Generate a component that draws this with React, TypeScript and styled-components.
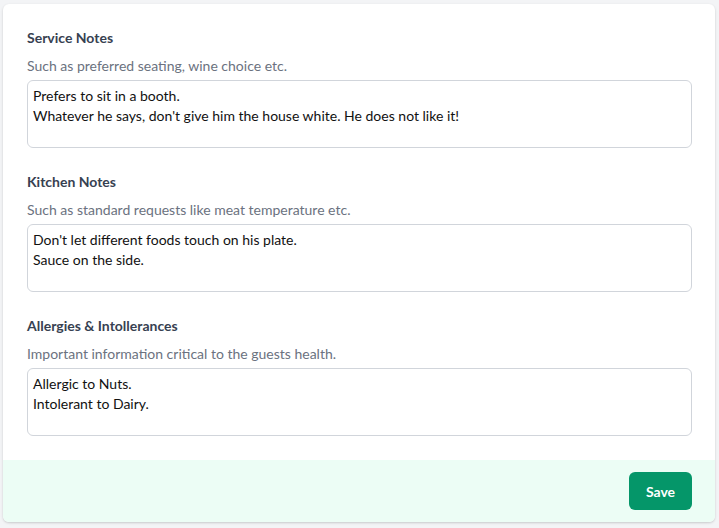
import React from "react";
import styled, { createGlobalStyle } from "styled-components";

const GlobalStyle = createGlobalStyle`
  html, body { margin: 0; padding: 0; background: #f3f4f6; }
  body { font-family: Lato, "Liberation Sans", sans-serif; }
  * { box-sizing: border-box; }
`;

const Page = styled.div`
  padding: 4px 4px 6px 3px;
`;

const Card = styled.form`
  background: #ffffff;
  border-radius: 6px;
  box-shadow: 0 1px 3px rgba(0, 0, 0, 0.12), 0 1px 2px rgba(0, 0, 0, 0.06);
  overflow: hidden;
`;

const Body = styled.div`
  padding: 24px 23px 24px 24px;
  display: flex;
  flex-direction: column;
  gap: 24px;
`;

const Field = styled.div`
  display: flex;
  flex-direction: column;
`;

const Label = styled.label`
  font-size: 14px;
  font-weight: 700;
  line-height: 20px;
  color: #374151;
`;

const Hint = styled.p`
  margin: 8px 0 4px;
  font-size: 14px;
  line-height: 20px;
  color: #6b7280;
`;

const TextArea = styled.textarea`
  display: block;
  width: 100%;
  height: 68px;
  resize: none;
  margin: 0;
  padding: 5px 5px;
  border: 1px solid #d1d5db;
  border-radius: 6px;
  font-family: Lato, "Liberation Sans", sans-serif;
  font-size: 14px;
  line-height: 20px;
  color: #111111;
  background: #ffffff;
  outline: none;
  overflow: hidden;
`;

const Footer = styled.div`
  background: #ecfdf5;
  padding: 12px 23px 12px 24px;
  display: flex;
  justify-content: flex-end;
`;

const SaveButton = styled.button`
  height: 38px;
  width: 63px;
  border: none;
  border-radius: 6px;
  background: #059669;
  color: #ffffff;
  font-family: Lato, "Liberation Sans", sans-serif;
  font-size: 14px;
  font-weight: 700;
  cursor: pointer;
`;

const fields = [
  {
    id: "service",
    label: "Service Notes",
    hint: "Such as preferred seating, wine choice etc.",
    value: "Prefers to sit in a booth.\nWhatever he says, don't give him the house white. He does not like it!",
  },
  {
    id: "kitchen",
    label: "Kitchen Notes",
    hint: "Such as standard requests like meat temperature etc.",
    value: "Don't let different foods touch on his plate.\nSauce on the side.",
  },
  {
    id: "allergies",
    label: "Allergies & Intollerances",
    hint: "Important information critical to the guests health.",
    value: "Allergic to Nuts.\nIntolerant to Dairy.",
  },
];

export default function App() {
  return (
    <Page>
      <GlobalStyle />
      <Card onSubmit={(e) => e.preventDefault()}>
        <Body>
          {fields.map((f) => (
            <Field key={f.id}>
              <Label htmlFor={f.id}>{f.label}</Label>
              <Hint>{f.hint}</Hint>
              <TextArea id={f.id} defaultValue={f.value} />
            </Field>
          ))}
        </Body>
        <Footer>
          <SaveButton type="submit">Save</SaveButton>
        </Footer>
      </Card>
    </Page>
  );
}
